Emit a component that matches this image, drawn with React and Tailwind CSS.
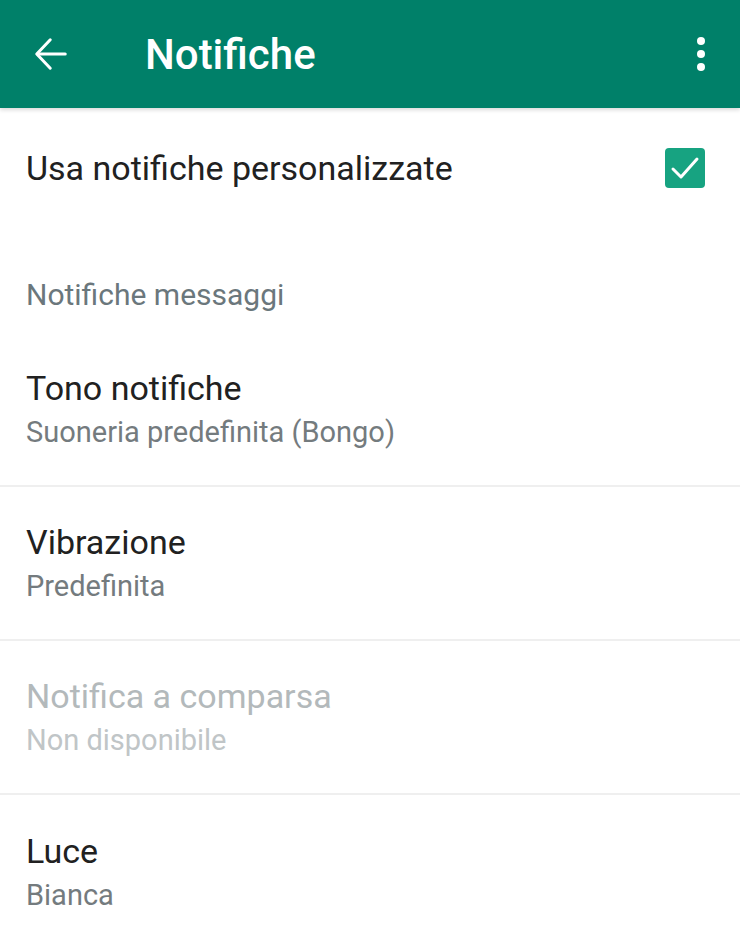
import React from "react";

function BackArrow() {
  return (
    <svg width="36" height="36" viewBox="0 0 24 24" fill="none" stroke="white" strokeWidth="2" strokeLinecap="round" strokeLinejoin="round">
      <path d="M21.5 12H3.5" />
      <path d="M11.5 2.5L2.5 12l9 9.5" />
    </svg>
  );
}

function Kebab() {
  return (
    <svg width="12" height="36" viewBox="0 0 12 36" fill="white">
      <circle cx="6" cy="5" r="4" />
      <circle cx="6" cy="18" r="4" />
      <circle cx="6" cy="31" r="4" />
    </svg>
  );
}

function Checkbox() {
  return (
    <div className="w-[40px] h-[40px] rounded-[4px] bg-[#17a381] flex items-center justify-center">
      <svg width="30" height="30" viewBox="0 0 30 30" fill="none" stroke="white" strokeWidth="3" strokeLinecap="round" strokeLinejoin="round">
        <path d="M3 16l8 8L27 6" />
      </svg>
    </div>
  );
}

function Pref({ title, summary, disabled, last }) {
  return (
    <div className={`h-[154px] flex flex-col justify-center pl-[26px] ${last ? "" : "border-b-2 border-[#efefef]"}`}>
      <div className={`text-[34px] leading-[40px] ${disabled ? "text-[#b3b9bb]" : "text-[#212121]"}`}>{title}</div>
      <div className={`text-[29px] leading-[36px] mt-[6px] ${disabled ? "text-[#c0c5c7]" : "text-[#747b7e]"}`}>{summary}</div>
    </div>
  );
}

export default function App() {
  return (
    <div className="w-[740px] h-[925px] bg-white overflow-hidden" style={{ fontFamily: "Roboto, 'Noto Sans', sans-serif" }}>
      <div className="h-[108px] bg-[#008069] flex items-center px-[33px] shadow-[0_2px_4px_rgba(0,0,0,0.15)] relative z-10">
        <BackArrow />
        <div className="ml-[76px] text-white text-[42px] font-medium flex-1">Notifiche</div>
        <Kebab />
      </div>
      <div className="h-[116px] flex items-center justify-between pl-[26px] pr-[35px] mt-[2px]">
        <div className="text-[34px] text-[#212121]">Usa notifiche personalizzate</div>
        <Checkbox />
      </div>
      <div className="h-[107px] flex items-end pl-[26px] pb-[16px]">
        <div className="text-[30px] text-[#6b777c]">Notifiche messaggi</div>
      </div>
      <Pref title="Tono notifiche" summary="Suoneria predefinita (Bongo)" />
      <Pref title="Vibrazione" summary="Predefinita" />
      <Pref title="Notifica a comparsa" summary="Non disponibile" disabled />
      <Pref title="Luce" summary="Bianca" last />
    </div>
  );
}
